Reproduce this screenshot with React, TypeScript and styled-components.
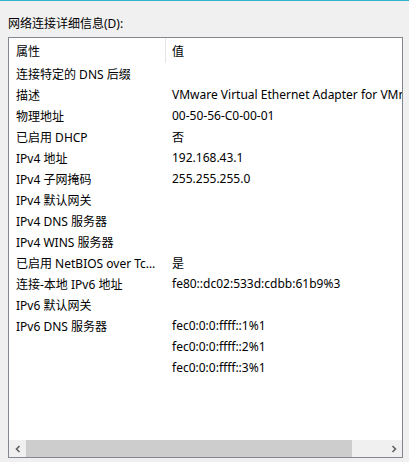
import * as React from "react";
import styled, { createGlobalStyle } from "styled-components";

const GlobalStyle = createGlobalStyle`
  html, body {
    margin: 0;
    padding: 0;
    background: #f0f0f0;
  }
  body {
    font-family: "Segoe UI", "Noto Sans", "Noto Sans CJK SC", sans-serif;
    font-size: 12px;
    color: #000;
  }
`;

const rows: [string, string][] = [
  ["连接特定的 DNS 后缀", ""],
  ["描述", "VMware Virtual Ethernet Adapter for VMnet8"],
  ["物理地址", "00-50-56-C0-00-01"],
  ["已启用 DHCP", "否"],
  ["IPv4 地址", "192.168.43.1"],
  ["IPv4 子网掩码", "255.255.255.0"],
  ["IPv4 默认网关", ""],
  ["IPv4 DNS 服务器", ""],
  ["IPv4 WINS 服务器", ""],
  ["已启用 NetBIOS over Tcpip", "是"],
  ["连接-本地 IPv6 地址", "fe80::dc02:533d:cdbb:61b9%3"],
  ["IPv6 默认网关", ""],
  ["IPv6 DNS 服务器", "fec0:0:0:ffff::1%1"],
  ["", "fec0:0:0:ffff::2%1"],
  ["", "fec0:0:0:ffff::3%1"],
];

const Window = styled.div`
  height: 462px;
  border-top: 1px solid #2db4c8;
  box-sizing: border-box;
  padding: 14px 6px 4px 8px;
  display: flex;
  flex-direction: column;
`;

const Caption = styled.div`
  height: 22px;
  line-height: 16px;
  padding-top: 1px;
  box-sizing: border-box;
`;

const ListBox = styled.div`
  flex: 1;
  background: #fff;
  border: 1px solid #828790;
  display: flex;
  flex-direction: column;
  overflow: hidden;
`;

const Header = styled.div`
  height: 25px;
  display: flex;
  align-items: center;
  flex-shrink: 0;
`;

const HeadCell = styled.div<{ $w?: number; $divider?: boolean }>`
  ${(p) => (p.$w ? `width: ${p.$w}px;` : "flex: 1;")}
  box-sizing: border-box;
  height: 100%;
  display: flex;
  align-items: center;
  padding-left: ${(p) => (p.$divider ? 7 : 6)}px;
  border-right: ${(p) => (p.$divider ? "1px solid #e5e5e5" : "none")};
  margin: 2px 0;
`;

const Body = styled.div`
  flex: 1;
  padding-top: 0px;
`;

const Row = styled.div`
  height: 21px;
  display: flex;
  align-items: center;
  white-space: nowrap;
`;

const Cell = styled.div<{ $w?: number }>`
  ${(p) => (p.$w ? `width: ${p.$w}px;` : "flex: 1;")}
  box-sizing: border-box;
  padding-left: ${(p) => (p.$w ? 7 : 6)}px;
  padding-right: ${(p) => (p.$w ? 6 : 0)}px;
  overflow: hidden;
  text-overflow: ${(p) => (p.$w ? "ellipsis" : "clip")};
`;

const ScrollBar = styled.div`
  height: 17px;
  display: flex;
  background: #f0f0f0;
  flex-shrink: 0;
  margin-bottom: 0;
`;

const Arrow = styled.div`
  width: 17px;
  display: flex;
  align-items: center;
  justify-content: center;
`;

const Track = styled.div`
  flex: 1;
  display: flex;
  padding: 0 0;
`;

const Thumb = styled.div`
  width: 326px;
  background: #cdcdcd;
`;

const Chevron = ({ left }: { left?: boolean }) => (
  <svg width="8" height="8" viewBox="0 0 8 8">
    <path
      d={left ? "M5.5 1 L2.5 4 L5.5 7" : "M2.5 1 L5.5 4 L2.5 7"}
      fill="none"
      stroke="#606060"
      strokeWidth="1.6"
    />
  </svg>
);

export default function App() {
  return (
    <>
      <GlobalStyle />
      <Window>
        <Caption>网络连接详细信息(D):</Caption>
        <ListBox>
          <Header>
            <HeadCell $w={157} $divider>
              属性
            </HeadCell>
            <HeadCell>值</HeadCell>
          </Header>
          <Body>
            {rows.map(([k, v], i) => (
              <Row key={i}>
                <Cell $w={157}>{k}</Cell>
                <Cell>{v}</Cell>
              </Row>
            ))}
          </Body>
          <ScrollBar>
            <Arrow>
              <Chevron left />
            </Arrow>
            <Track>
              <Thumb />
            </Track>
            <Arrow>
              <Chevron />
            </Arrow>
          </ScrollBar>
        </ListBox>
      </Window>
    </>
  );
}
